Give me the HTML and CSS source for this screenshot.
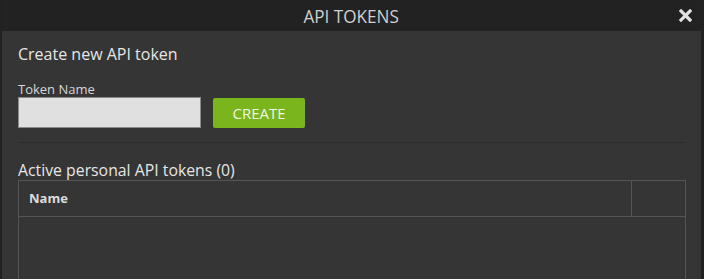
FILE: index.html
```html
<!DOCTYPE html>
<html>
<head>
<meta charset="utf-8">
<link rel="stylesheet" href="styles.css">
</head>
<body>
<div class="dialog">
  <div class="titlebar">
    <span class="title">API TOKENS</span>
    <svg class="close" width="13" height="13" viewBox="0 0 13 13"><path d="M2 2 L11 11 M11 2 L2 11" stroke="#e2e2e2" stroke-width="3.2" stroke-linecap="square"/></svg>
  </div>
  <div class="content">
    <section class="create">
      <h2 class="heading">Create new API token</h2>
      <label class="label">Token Name</label>
      <div class="row">
        <input class="input" type="text">
        <button class="btn">CREATE</button>
      </div>
    </section>
    <section class="active">
      <h2 class="heading cond">Active personal API tokens (0)</h2>
      <div class="table">
        <div class="thead">
          <div class="th name">Name</div>
          <div class="th act"></div>
        </div>
        <div class="tbody"></div>
      </div>
    </section>
  </div>
</div>
</body>
</html>
```
FILE: styles.css
```css
html, body {
  margin: 0;
  padding: 0;
  background: #1e2226;
  height: 279px;
  overflow: hidden;
  font-family: "Open Sans", "Noto Sans", sans-serif;
}
.dialog {
  margin: 0 3px 0 2px;
  height: 279px;
  background: #353535;
  display: flex;
  flex-direction: column;
  overflow: hidden;
}
.titlebar {
  flex-shrink: 0;
  height: 31px;
  background: #222222;
  display: flex;
  align-items: center;
  justify-content: center;
  position: relative;
}
.title {
  color: #d0d0d0;
  font-size: 18px;
  transform: scaleX(0.95);
}
.close {
  position: absolute;
  right: 9px;
  top: 9px;
}
.content {
  flex-shrink: 0;
  padding: 0 15px 0 16px;
}
.create {
  padding-top: 13px;
  padding-bottom: 14px;
  border-bottom: 1px solid #2c2c2c;
}
.heading {
  margin: 0;
  font-weight: normal;
  font-size: 16px;
  color: #e6e6e6;
  line-height: 20px;
}
.heading.cond {
  font-size: 17px;
  transform-origin: left;
  transform: scaleX(0.93);
}
.label {
  display: block;
  margin-top: 17px;
  font-size: 13px;
  color: #d6d6d6;
  line-height: 16px;
}
.row {
  display: flex;
  align-items: center;
  gap: 12px;
  margin-top: 0;
}
.input {
  box-sizing: border-box;
  width: 183px;
  height: 31px;
  margin: 0;
  background: #e0e0e0;
  border: 1px solid #8a8a8a;
  padding: 0 6px;
}
.btn {
  box-sizing: border-box;
  width: 92px;
  height: 30px;
  margin: 0;
  border: none;
  border-radius: 2px;
  background: #7ab51d;
  color: #eef5e0;
  font-family: "Open Sans", sans-serif;
  font-size: 15px;
  padding: 0;
}
.active {
  padding-top: 17px;
}
.table {
  border: 1px solid #555555;
  border-bottom: none;
  height: 98px;
}
.thead {
  display: flex;
  height: 35px;
  border-bottom: 1px solid #555555;
}
.th {
  font-size: 13px;
  font-weight: bold;
  color: #dcdcdc;
  display: flex;
  align-items: center;
  padding-bottom: 2px;
}
.th.name {
  flex: 1;
  padding-left: 10px;
  border-right: 1px solid #555555;
}
.th.act {
  width: 53px;
}
```
